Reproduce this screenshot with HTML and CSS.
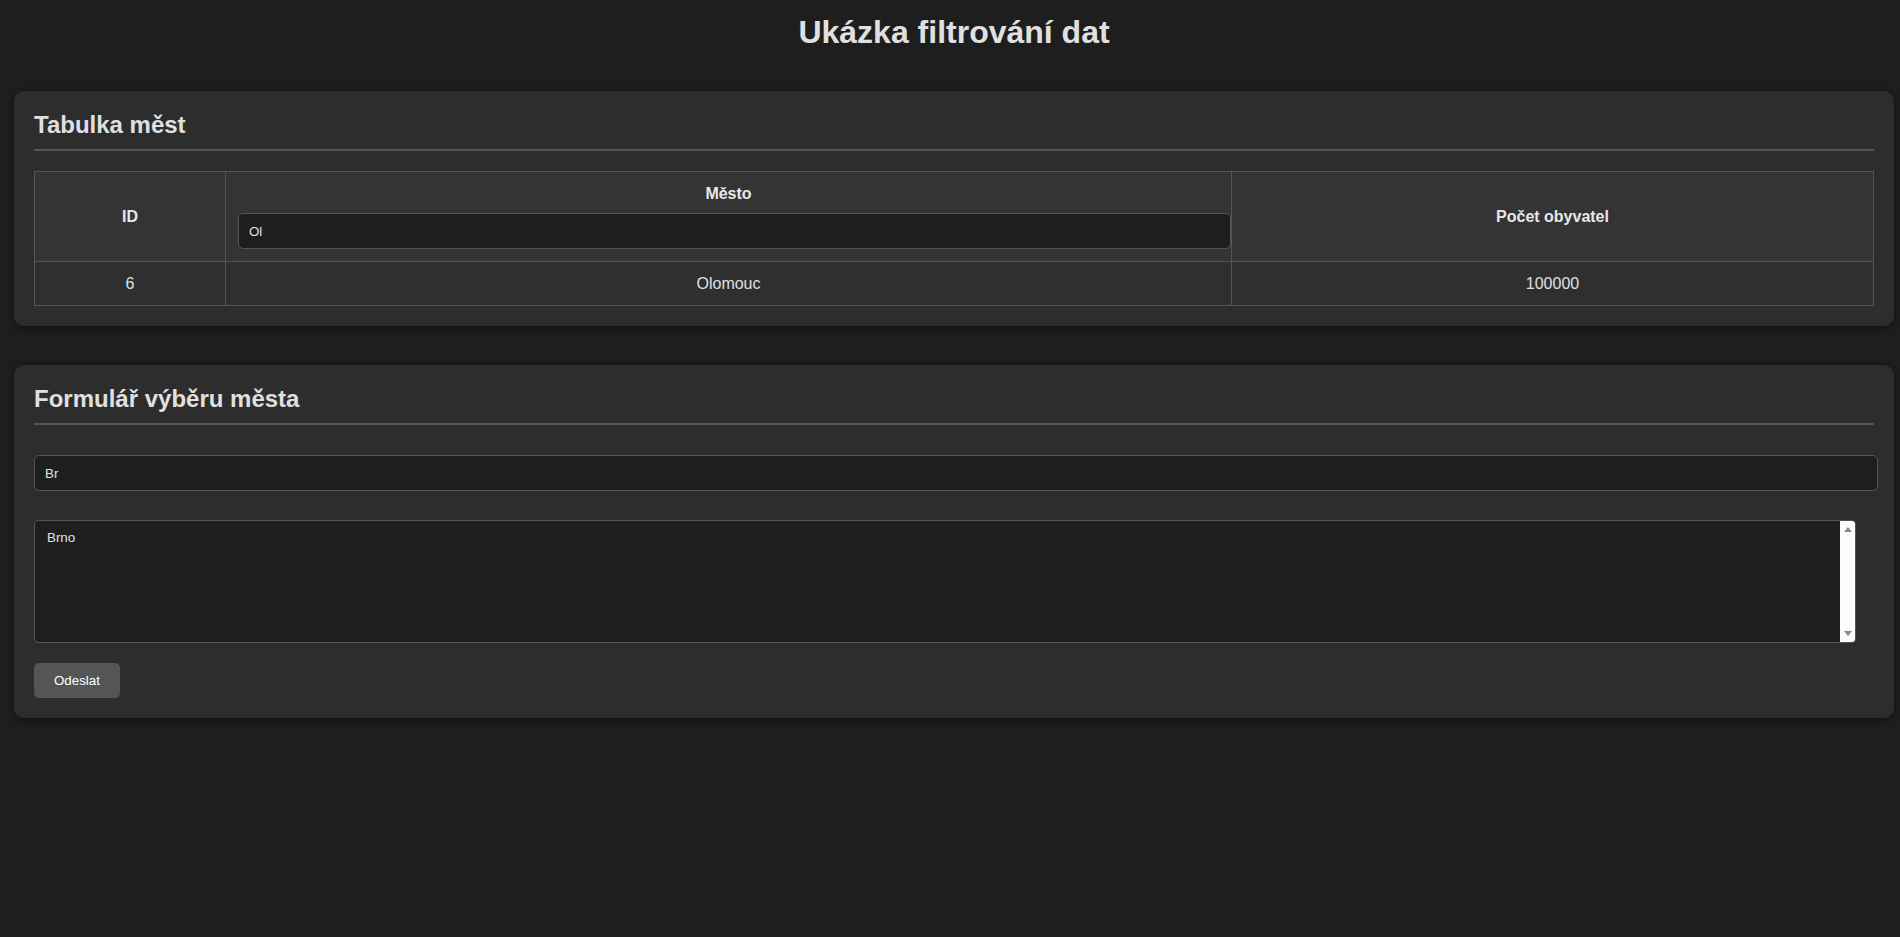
FILE: index.html
```html
<!DOCTYPE html>
<html lang="cs">
<head>
<meta charset="utf-8">
<title>Ukázka filtrování dat</title>
<link rel="stylesheet" href="styles.css">
</head>
<body>
<div class="page">
  <h1 class="title">Ukázka filtrování dat</h1>

  <section class="card">
    <h2 class="card-title">Tabulka měst</h2>
    <table class="cities">
      <colgroup>
        <col class="col-id">
        <col class="col-city">
        <col class="col-pop">
      </colgroup>
      <thead>
        <tr>
          <th>ID</th>
          <th>
            <div class="th-label">Město</div>
            <input class="filter-input" type="text" value="Ol">
          </th>
          <th>Počet obyvatel</th>
        </tr>
      </thead>
      <tbody>
        <tr>
          <td>6</td>
          <td>Olomouc</td>
          <td>100000</td>
        </tr>
      </tbody>
    </table>
  </section>

  <section class="card">
    <h2 class="card-title">Formulář výběru města</h2>
    <form class="city-form">
      <input class="form-input" type="text" value="Br">
      <div class="listbox" role="listbox">
        <div class="listbox-options">
          <div class="listbox-option" role="option">Brno</div>
        </div>
        <div class="scrollbar">
          <span class="arrow arrow-up"></span>
          <span class="arrow arrow-down"></span>
        </div>
      </div>
      <button class="submit" type="button">Odeslat</button>
    </form>
  </section>
</div>
</body>
</html>
```

FILE: styles.css
```css
html, body {
  margin: 0;
  padding: 0;
  background: #1e1e1e;
}

body {
  font-family: "Liberation Sans", Arial, sans-serif;
  color: #e0e0e0;
}

.page {
  padding: 14px 6px 20px 14px;
}

.title {
  margin: 0 0 40px;
  font-size: 32px;
  font-weight: bold;
  text-align: center;
  color: #e0e0e0;
}

.card {
  background: #2d2d2d;
  border-radius: 10px;
  padding: 20px;
  margin-bottom: 39px;
  box-shadow: 0 2px 10px rgba(0, 0, 0, 0.45);
}

.card-title {
  margin: 0 0 20px;
  padding-bottom: 10px;
  border-bottom: 2px solid #555555;
  font-size: 24px;
  font-weight: bold;
  color: #e0e0e0;
}

.cities {
  width: 100%;
  border-collapse: collapse;
  table-layout: fixed;
  font-size: 16px;
}

.col-id { width: 191px; }
.col-city { width: 1006px; }

.cities th,
.cities td {
  border: 1px solid #555555;
  padding: 12px;
  text-align: center;
  vertical-align: middle;
}

.cities th {
  background: #343434;
  font-weight: bold;
  color: #e8e8e8;
}

.cities td {
  background: #2f2f2f;
  color: #e0e0e0;
  line-height: 19px;
}

.th-label {
  line-height: 19px;
}

.filter-input {
  display: block;
  box-sizing: border-box;
  width: calc(100% + 12px);
  height: 36px;
  margin: 10px 0 0;
  padding: 0 10px;
  background: #1e1e1e;
  border: 1px solid #555555;
  border-radius: 5px;
  color: #e0e0e0;
  font-family: "Liberation Sans", Arial, sans-serif;
  font-size: 13.33px;
  text-align: left;
}

.city-form {
  display: flex;
  flex-direction: column;
  align-items: flex-start;
}

.form-input {
  box-sizing: border-box;
  width: calc(100% + 4px);
  height: 36px;
  margin: 10px 0 0;
  padding: 0 10px;
  background: #1e1e1e;
  border: 1px solid #555555;
  border-radius: 5px;
  color: #e0e0e0;
  font-family: "Liberation Sans", Arial, sans-serif;
  font-size: 13.33px;
}

.listbox {
  box-sizing: border-box;
  display: flex;
  width: 1822px;
  height: 123px;
  margin-top: 29px;
  background: #1e1e1e;
  border: 1px solid #555555;
  border-radius: 4px;
  overflow: hidden;
}

.listbox-options {
  flex: 1;
  padding: 9px 12px;
}

.listbox-option {
  font-size: 13.33px;
  line-height: 16px;
  color: #e0e0e0;
}

.scrollbar {
  width: 15px;
  background: #fdfdfd;
  display: flex;
  flex-direction: column;
  justify-content: space-between;
  align-items: center;
  padding: 6px 0;
}

.arrow {
  width: 0;
  height: 0;
  border-left: 4.5px solid transparent;
  border-right: 4.5px solid transparent;
}

.arrow-up {
  border-bottom: 5px solid #8a8a8a;
}

.arrow-down {
  border-top: 5px solid #8a8a8a;
}

.submit {
  margin-top: 20px;
  height: 35px;
  padding: 0 20px;
  background: #555555;
  border: none;
  border-radius: 5px;
  color: #ffffff;
  font-family: "Liberation Sans", Arial, sans-serif;
  font-size: 13.33px;
}
```
